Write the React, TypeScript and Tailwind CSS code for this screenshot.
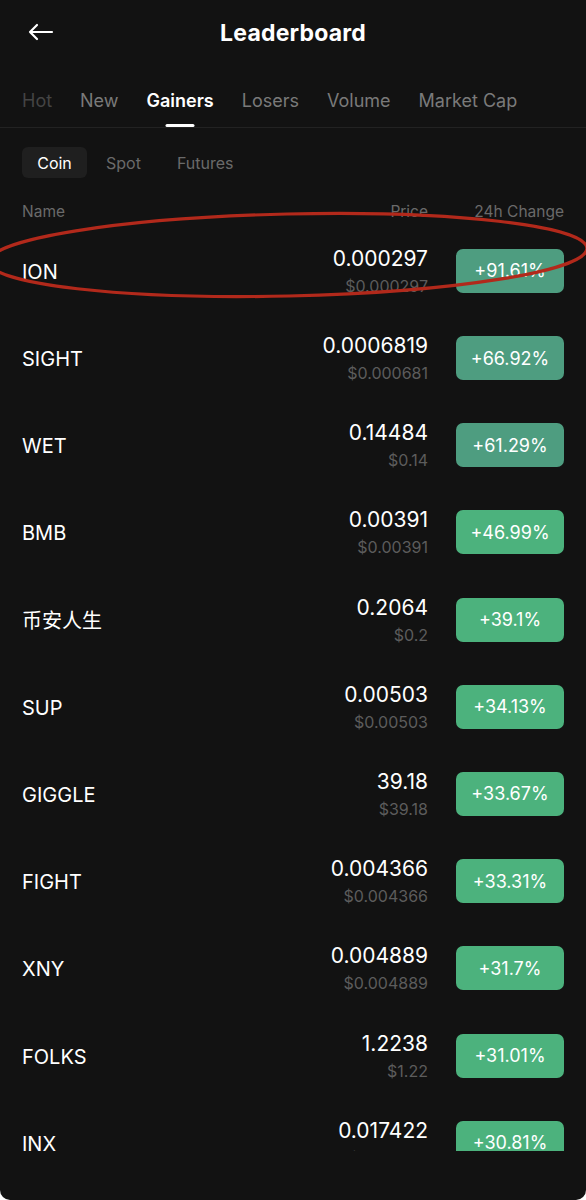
import React from 'react';

interface Row {
  name: string;
  price: string;
  usd: string;
  change: string;
  tone: 'dim' | 'bright';
}

const rows: Row[] = [
  { name: 'ION', price: '0.000297', usd: '$0.000297', change: '+91.61%', tone: 'dim' },
  { name: 'SIGHT', price: '0.0006819', usd: '$0.000681', change: '+66.92%', tone: 'dim' },
  { name: 'WET', price: '0.14484', usd: '$0.14', change: '+61.29%', tone: 'dim' },
  { name: 'BMB', price: '0.00391', usd: '$0.00391', change: '+46.99%', tone: 'bright' },
  { name: '币安人生', price: '0.2064', usd: '$0.2', change: '+39.1%', tone: 'bright' },
  { name: 'SUP', price: '0.00503', usd: '$0.00503', change: '+34.13%', tone: 'bright' },
  { name: 'GIGGLE', price: '39.18', usd: '$39.18', change: '+33.67%', tone: 'bright' },
  { name: 'FIGHT', price: '0.004366', usd: '$0.004366', change: '+33.31%', tone: 'bright' },
  { name: 'XNY', price: '0.004889', usd: '$0.004889', change: '+31.7%', tone: 'bright' },
  { name: 'FOLKS', price: '1.2238', usd: '$1.22', change: '+31.01%', tone: 'bright' },
  { name: 'INX', price: '0.017422', usd: '$0.017422', change: '+30.81%', tone: 'bright' },
];

const tabs = ['Hot', 'New', 'Gainers', 'Losers', 'Volume', 'Market Cap'];

export default function App() {
  return (
    <div
      className="relative h-[1200px] w-[586px] overflow-hidden rounded-b-[10px] bg-[#121212] text-white"
      style={{ fontFamily: 'Inter, "Noto Sans CJK SC", sans-serif' }}
    >
      {/* hand-drawn highlight around the first row */}
      <svg className="pointer-events-none absolute left-0 top-[200px] z-10" width="586" height="110" viewBox="0 0 586 110">
        <ellipse cx="288" cy="55" rx="299" ry="41" transform="rotate(-1.3 288 55)" fill="none" stroke="#b2291b" strokeWidth="3.2" />
      </svg>

      {/* header */}
      <div className="relative flex h-[66px] items-center justify-center">
        <svg className="absolute left-[27px] top-[22px]" width="28" height="20" viewBox="0 0 28 20" fill="none">
          <path d="M3 10h22M10 3L3 10l7 7" stroke="white" strokeWidth="2.2" strokeLinecap="round" strokeLinejoin="round" />
        </svg>
        <h1 className="text-[23px] font-bold tracking-[0.2px]">Leaderboard</h1>
      </div>

      {/* tabs */}
      <div className="flex h-[62px] items-center gap-[28px] border-b border-[#222] pl-[22px] pt-[8px]">
        {tabs.map((t) => (
          <div key={t} className="relative flex h-full items-center">
            <span
              className={
                t === 'Gainers'
                  ? 'text-[18px] font-semibold text-white'
                  : t === 'Hot'
                  ? 'text-[18px] text-[#444]'
                  : 'text-[18px] text-[#7a7a7a]'
              }
            >
              {t}
            </span>
            {t === 'Gainers' && (
              <div className="absolute bottom-[0px] left-1/2 h-[3px] w-[29px] -translate-x-1/2 rounded-full bg-white" />
            )}
          </div>
        ))}
      </div>

      {/* sub tabs */}
      <div className="flex items-center gap-[19px] px-[22px] pt-[19px]">
        <div className="flex h-[31px] w-[65px] items-center justify-center rounded-[6px] bg-[#1f1f1f] text-[16px] text-white">
          Coin
        </div>
        <span className="text-[16px] text-[#6a6a6a]">Spot</span>
        <span className="ml-[17px] text-[16px] text-[#6a6a6a]">Futures</span>
      </div>

      {/* column header */}
      <div className="flex items-center px-[22px] pt-[22px] text-[15.5px] text-[#6a6a6a]">
        <span className="flex-1">Name</span>
        <span>Price</span>
        <span className="w-[136px] text-right">24h Change</span>
      </div>

      {/* list */}
      <div className="mt-[4px] h-[924px] overflow-hidden">
        {rows.map((r) => (
          <div key={r.name} className="flex h-[87.2px] items-center px-[22px]">
            <span className="flex-1 pt-[2px] text-[20px]">{r.name}</span>
            <div className="flex flex-col items-end">
              <span className="text-[21px] leading-[26px]">{r.price}</span>
              <span className="mt-[4px] text-[16px] leading-[20px] text-[#5c5c5c]">{r.usd}</span>
            </div>
            <div
              className={
                r.tone === 'dim'
                  ? 'ml-[28px] flex h-[44px] w-[108px] items-center justify-center rounded-[7px] bg-[#4e9d80] text-[18px]'
                  : 'ml-[28px] flex h-[44px] w-[108px] items-center justify-center rounded-[7px] bg-[#4cb27d] text-[18px]'
              }
            >
              {r.change}
            </div>
          </div>
        ))}
      </div>
    </div>
  );
}
